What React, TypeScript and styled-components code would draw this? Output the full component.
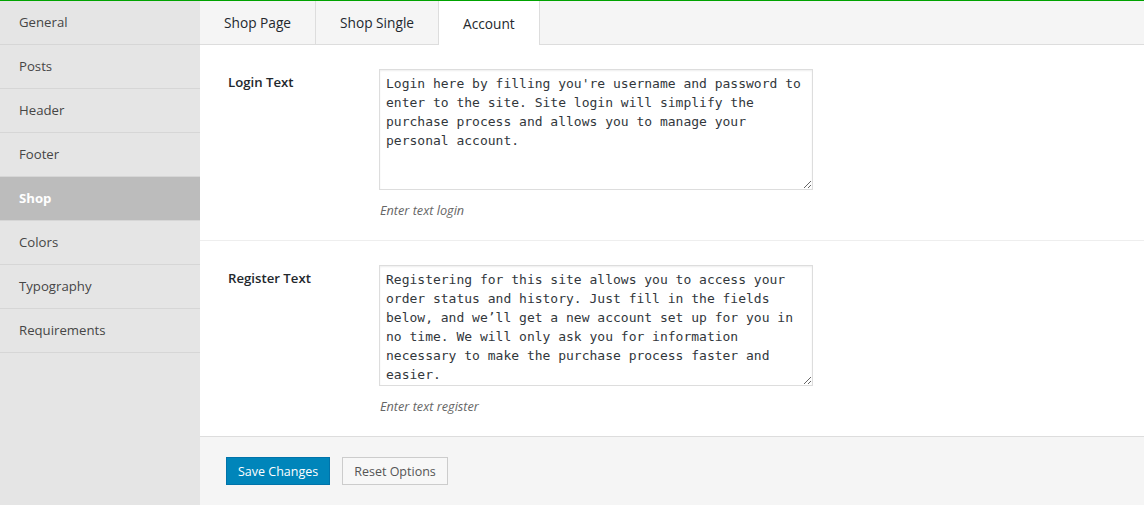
import styled, { createGlobalStyle } from "styled-components";

const GlobalStyle = createGlobalStyle`
  html, body {
    margin: 0;
    padding: 0;
    background: #ffffff;
  }

  body {
    font-family: "Open Sans", "Noto Sans", sans-serif;
    font-size: 13px;
    color: #23282d;
  }
`;

const Page = styled.div`
  display: flex;
  height: 504px;
  border-top: 1px solid #00a300;
  overflow: hidden;
`;

const Sidebar = styled.nav`
  width: 200px;
  flex-shrink: 0;
  background: #e5e5e5;
  display: flex;
  flex-direction: column;
`;

interface MenuItemProps {
  readonly $active?: boolean;
}

const MenuItem = styled.a<MenuItemProps>`
  display: block;
  height: 43px;
  line-height: 43px;
  padding-left: 19px;
  border-bottom: 1px solid #d6d6d6;
  background: ${(props) => (props.$active ? "#bcbcbc" : "transparent")};
  color: ${(props) => (props.$active ? "#ffffff" : "#464646")};
  font-weight: ${(props) => (props.$active ? 700 : 400)};
  font-size: 13.2px;
  text-decoration: none;
  cursor: pointer;
`;

const Main = styled.main`
  flex: 1;
  display: flex;
  flex-direction: column;
  min-width: 0;
`;

const TabBar = styled.div`
  display: flex;
  height: 43px;
  background: #f5f5f5;
  border-bottom: 1px solid #dddddd;
`;

interface TabProps {
  readonly $active?: boolean;
}

const Tab = styled.a<TabProps>`
  display: flex;
  align-items: center;
  padding: 0 24px;
  height: ${(props) => (props.$active ? "44px" : "43px")};
  border-right: 1px solid #dddddd;
  background: ${(props) => (props.$active ? "#ffffff" : "transparent")};
  color: #23282d;
  font-size: 13.7px;
  text-decoration: none;
  cursor: pointer;
`;

const Rows = styled.div`
  display: flex;
  flex-direction: column;
`;

const Row = styled.div`
  display: flex;
  padding: 24px 28px 20px;
  border-bottom: 1px solid #eeeeee;

  &:last-child {
    border-bottom-color: #dddddd;
  }
`;

const Label = styled.label`
  width: 151px;
  flex-shrink: 0;
  line-height: 26px;
  font-weight: 600;
  font-size: 13.2px;
  color: #23282d;
`;

const Field = styled.div`
  display: flex;
  flex-direction: column;
`;

const TextArea = styled.textarea`
  box-sizing: border-box;
  width: 434px;
  height: 121px;
  margin: 0;
  padding: 4px 6px 2px;
  border: 1px solid #dddddd;
  box-shadow: inset 0 1px 2px rgba(0, 0, 0, 0.07);
  font-family: "DejaVu Sans Mono", "Liberation Mono", monospace;
  font-size: 13px;
  line-height: 19px;
  color: #32373c;
  background: #ffffff;
  overflow: hidden;
  resize: both;
  outline: none;
`;

const Description = styled.p`
  margin: 10px 0 0 1px;
  line-height: 20px;
  font-style: italic;
  font-size: 12.7px;
  color: #666666;
`;

const Footer = styled.div`
  display: flex;
  gap: 12px;
  padding: 20px 26px;
  background: #f5f5f5;
  flex: 1;
`;

interface ButtonProps {
  readonly $primary?: boolean;
}

const Button = styled.button<ButtonProps>`
  box-sizing: border-box;
  height: 28px;
  padding: 0 11px;
  border-radius: 0;
  border: 1px solid ${(props) => (props.$primary ? "#0073aa" : "#cccccc")};
  background: ${(props) => (props.$primary ? "#0085ba" : "#f7f7f7")};
  color: ${(props) => (props.$primary ? "#ffffff" : "#555555")};
  font-family: "Open Sans", "Noto Sans", sans-serif;
  font-size: 12.5px;
  cursor: pointer;
`;

const menu = [
  "General",
  "Posts",
  "Header",
  "Footer",
  "Shop",
  "Colors",
  "Typography",
  "Requirements",
];

const tabs = ["Shop Page", "Shop Single", "Account"];

const fields = [
  {
    label: "Login Text",
    value:
      "Login here by filling you're username and password to enter to the site. Site login will simplify the purchase process and allows you to manage your personal account.",
    description: "Enter text login",
  },
  {
    label: "Register Text",
    value:
      "Registering for this site allows you to access your order status and history. Just fill in the fields below, and we\u2019ll get a new account set up for you in no time. We will only ask you for information necessary to make the purchase process faster and easier.",
    description: "Enter text register",
  },
];

export default function App() {
  return (
    <>
      <GlobalStyle />
      <Page>
        <Sidebar>
          {menu.map((item) => (
            <MenuItem key={item} $active={item === "Shop"}>
              {item}
            </MenuItem>
          ))}
        </Sidebar>
        <Main>
          <TabBar>
            {tabs.map((tab) => (
              <Tab key={tab} $active={tab === "Account"}>
                {tab}
              </Tab>
            ))}
          </TabBar>
          <Rows>
            {fields.map((field) => (
              <Row key={field.label}>
                <Label>{field.label}</Label>
                <Field>
                  <TextArea defaultValue={field.value} spellCheck={false} />
                  <Description>{field.description}</Description>
                </Field>
              </Row>
            ))}
          </Rows>
          <Footer>
            <Button $primary>Save Changes</Button>
            <Button>Reset Options</Button>
          </Footer>
        </Main>
      </Page>
    </>
  );
}
